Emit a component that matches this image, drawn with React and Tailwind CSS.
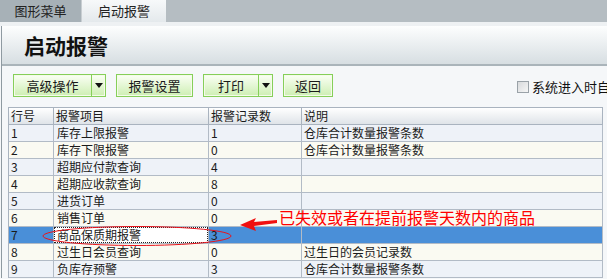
import React from "react";

const rows = [
  ["1", "库存上限报警", "1", "仓库合计数量报警条数"],
  ["2", "库存下限报警", "0", "仓库合计数量报警条数"],
  ["3", "超期应付款查询", "4", ""],
  ["4", "超期应收款查询", "8", ""],
  ["5", "进货订单", "0", ""],
  ["6", "销售订单", "0", ""],
  ["7", "商品保质期报警", "3", ""],
  ["8", "过生日会员查询", "0", "过生日的会员记录数"],
  ["9", "负库存预警", "3", "仓库合计数量报警条数"],
];

function Caret() {
  return (
    <svg width="8" height="5" viewBox="0 0 8 5">
      <path d="M0 0 H8 L4 5 Z" fill="#111" />
    </svg>
  );
}

function Btn({ label, w, split, sw }) {
  return (
    <div className="flex h-[23px] shrink-0 border border-[#86cf59] bg-gradient-to-b from-[#fbfff5] to-[#cdeeb2] shadow-[inset_0_0_0_1px_#f4fbe9]">
      <div className="flex items-center justify-center text-[13px] text-[#1a1a1a]" style={{ width: w }}>
        {label}
      </div>
      {split && (
        <div className="flex items-center justify-center border-l border-[#86cf59]" style={{ width: sw }}>
          <Caret />
        </div>
      )}
    </div>
  );
}

export default function App() {
  return (
    <div
      className="relative h-[279px] w-[607px] overflow-hidden bg-[#f5f7f9] text-[#1a1a1a]"
      style={{ fontFamily: '"Noto Sans CJK SC", "Noto Sans", sans-serif' }}
    >
      {/* tab bar */}
      <div className="flex h-[22px] bg-[#b5bdc2]">
        <div className="flex w-[82px] items-center justify-center border-r border-[#c8ced2] bg-[#a7b1b7] text-[13px] text-[#222]">
          图形菜单
        </div>
        <div className="flex w-[84px] items-center justify-center bg-gradient-to-b from-[#f7f9fa] to-[#e4e9ec] text-[13px] text-[#222]">
          启动报警
        </div>
      </div>
      <div className="h-[4px] bg-[#eef1f3]" />

      <div className="ml-px border-l border-[#8f9aa1]">
        {/* title */}
        <div className="flex h-[40px] items-center border-b-2 border-[#aab4ba] bg-gradient-to-b from-[#fdfefe] to-[#d7dee2] pl-[22px]">
          <span className="text-[21px] font-bold leading-none text-[#111]">启动报警</span>
        </div>

        {/* toolbar */}
        <div className="flex h-[41px] items-start overflow-hidden pl-[11px] pt-[8px]">
          <Btn label="高级操作" w={77} split sw={14} />
          <div className="w-[10px] shrink-0" />
          <Btn label="报警设置" w={75} />
          <div className="w-[10px] shrink-0" />
          <Btn label="打印" w={54} split sw={14} />
          <div className="w-[10px] shrink-0" />
          <Btn label="返回" w={48} />
          <div className="ml-[184px] flex shrink-0 items-center whitespace-nowrap pt-[6px]">
            <div className="h-[12px] w-[12px] border border-[#9aa2a8] bg-gradient-to-br from-[#d8dadc] to-[#f6f6f6]" />
            <span className="ml-[3px] text-[13px] leading-none text-[#111]">系统进入时自动启动报警</span>
          </div>
        </div>

        {/* table */}
        <div className="ml-[6px] w-[595px] border-l border-t border-[#a9b3bf] text-[12px] leading-none">
          <div className="grid h-[17px] grid-cols-[45px_155px_93px_1fr] bg-gradient-to-b from-[#ffffff] to-[#dde2e7]">
            {["行号", "报警项目", "报警记录数", "说明"].map((h) => (
              <div key={h} className="flex items-center border-b border-r border-[#a9b3bf] pl-[2px]">
                {h}
              </div>
            ))}
          </div>
          {rows.map((r, i) => {
            const sel = i === 6;
            const bg = sel ? "bg-[#4a8fd8]" : i % 2 === 0 ? "bg-[#eef2f8]" : "bg-[#fafaf2]";
            return (
              <div key={i} className={`grid h-[17px] grid-cols-[45px_155px_93px_1fr] ${bg}`}>
                <div className="flex items-center border-b border-r border-[#b2bbc6] pl-[2px]">{r[0]}</div>
                {sel ? (
                  <div className="flex items-center border-b border-r border-[#b2bbc6] bg-white">
                    <div className="flex h-full w-full items-center border border-dotted border-[#222] pl-[2px]">{r[1]}</div>
                  </div>
                ) : (
                  <div className="flex items-center border-b border-r border-[#b2bbc6] pl-[3px]">{r[1]}</div>
                )}
                <div className="flex items-center border-b border-r border-[#b2bbc6] pl-[2px]">{r[2]}</div>
                <div className="flex items-center border-b border-r border-[#b2bbc6] pl-[2px]">{r[3]}</div>
              </div>
            );
          })}
        </div>
      </div>

      {/* annotation */}
      <svg className="pointer-events-none absolute left-0 top-0" width="607" height="279">
        <ellipse cx="137" cy="236" rx="94" ry="9.5" fill="none" stroke="#e8141c" strokeWidth="1" />
        <path d="M240 225 L256 218 L254 222 L277 220 L277 223 L254 226 L256 231 Z" fill="#f01010" />
      </svg>
      <div className="absolute left-[279px] top-[209px] whitespace-nowrap text-[16px] leading-none text-[#ff0000]">
        已失效或者在提前报警天数内的商品
      </div>
    </div>
  );
}
